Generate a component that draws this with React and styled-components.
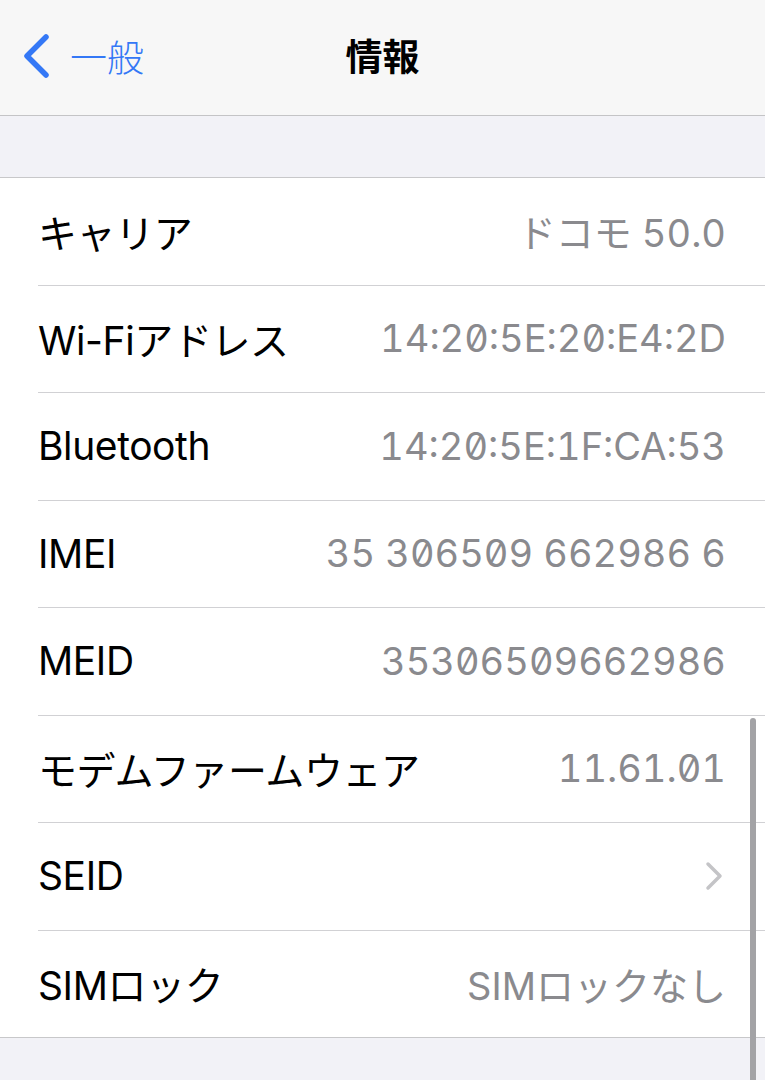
import React from "react";
import styled, { createGlobalStyle } from "styled-components";

const Global = createGlobalStyle`
  html, body { margin: 0; padding: 0; background: #f2f2f7; }
  body { font-family: Inter, "Noto Sans CJK JP", sans-serif; -webkit-font-smoothing: antialiased; }
`;

const Screen = styled.div`
  position: relative;
  width: 765px;
  height: 1080px;
  overflow: hidden;
  background: #f2f2f7;
`;

const NavBar = styled.header`
  height: 115px;
  background: #f7f7f7;
  border-bottom: 1px solid #c4c4c6;
  display: grid;
  grid-template-columns: 1fr auto 1fr;
  align-items: center;
`;

const BackButton = styled.div`
  display: flex;
  align-items: center;
  gap: 20px;
  padding-left: 22px;
  color: #3478f6;
  font-size: 37px;
  font-family: "Noto Sans CJK JP", sans-serif;
  font-weight: 300;
  margin-top: -4px;
`;

const Title = styled.h1`
  margin: 0;
  font-size: 37px;
  font-weight: 700;
  font-family: "Noto Sans CJK JP", sans-serif;
  color: #000;
  margin-top: -6px;
`;

const Spacer = styled.div`
  height: 61px;
`;

const Group = styled.section`
  background: #fff;
  border-top: 1px solid #c8c8ca;
  border-bottom: 1px solid #c8c8ca;
  padding-left: 38px;
`;

const Row = styled.div`
  height: 106.5px;
  display: flex;
  align-items: center;
  justify-content: space-between;
  padding-right: 39px;
  padding-left: 0;
  border-top: ${(p) => (p.$first ? "none" : "1px solid #d1d1d4")};
`;

const Label = styled.span`
  font-size: 39px;
  color: #000;
  letter-spacing: -0.4px;
  margin-top: -1px;
`;

const Value = styled.span`
  font-size: 38px;
  color: #8a8a8e;
  font-feature-settings: ${(p) => (p.$plain ? '"tnum"' : '"tnum", "zero"')};
  margin-top: -1px;
`;

const Chevron = styled.svg`
  width: 20px;
  height: 30px;
  margin-right: 2px;
`;

const ScrollThumb = styled.div`
  position: absolute;
  right: 9px;
  top: 718px;
  width: 6px;
  height: 380px;
  border-radius: 3px;
  background: #a3a3a6;
`;

const rows = [
  ["キャリア", "ドコモ 50.0", true],
  ["Wi-Fiアドレス", "14:20:5E:20:E4:2D"],
  ["Bluetooth", "14:20:5E:1F:CA:53"],
  ["IMEI", "35 306509 662986 6"],
  ["MEID", "35306509662986"],
  ["モデムファームウェア", "11.61.01"],
  ["SEID", null],
  ["SIMロック", "SIMロックなし", true],
];

export default function App() {
  return (
    <Screen>
      <Global />
      <NavBar>
        <BackButton>
          <svg width="28" height="46" viewBox="0 0 28 46">
            <path d="M24 4 L5 23 L24 42" fill="none" stroke="#3478f6" strokeWidth="5.5" strokeLinecap="round" strokeLinejoin="round" />
          </svg>
          <span>一般</span>
        </BackButton>
        <Title>情報</Title>
        <div />
      </NavBar>
      <Spacer />
      <Group>
        {rows.map(([l, v, plain], i) => (
          <Row key={l} $first={i === 0}>
            <Label>{l}</Label>
            {v !== null ? (
              <Value $plain={plain}>{v}</Value>
            ) : (
              <Chevron viewBox="0 0 20 30">
                <path d="M4 3 L16 15 L4 27" fill="none" stroke="#c4c4c7" strokeWidth="3.5" strokeLinecap="round" strokeLinejoin="round" />
              </Chevron>
            )}
          </Row>
        ))}
      </Group>
      <ScrollThumb />
    </Screen>
  );
}
